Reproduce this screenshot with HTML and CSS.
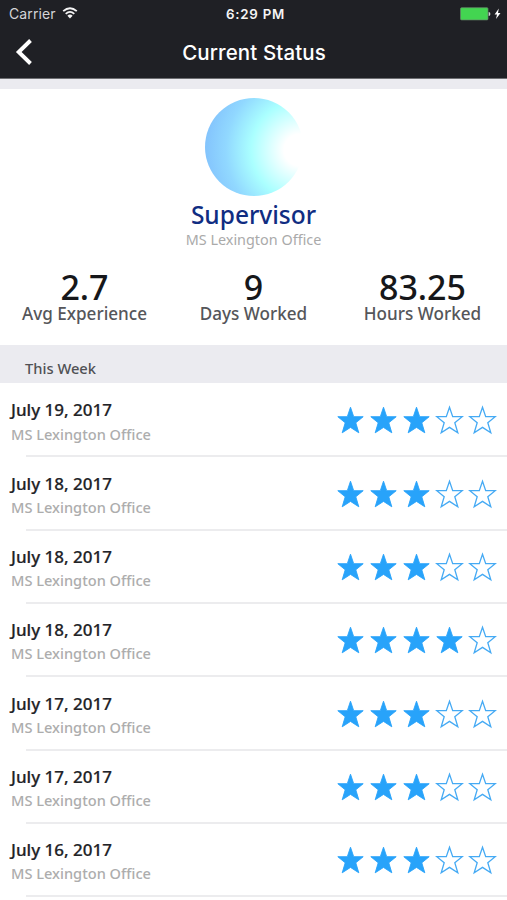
FILE: index.html
```
<!DOCTYPE html>
<html lang="en">
<head>
<meta charset="utf-8">
<title>Current Status</title>
<link rel="stylesheet" href="styles.css">
</head>
<body>
<svg class="defs" aria-hidden="true">
  <symbol id="star" viewBox="0 0 29 30"><path d="M14.5 2.2 L17.7 11.7 H27.2 L19.8 17.8 L22.8 27.8 L14.5 22.4 L6.2 27.8 L9.2 17.8 L1.8 11.7 H11.3 Z"/></symbol>
</svg>
<header class="top">
  <div class="status">
    <div class="carrier"><span>Carrier</span>
      <svg class="wifi" viewBox="0 0 16 12"><path d="M1.2 4.2 Q8 -1.8 14.8 4.2 M3.7 6.8 Q8 3 12.3 6.8" fill="none" stroke="#f4f4f5" stroke-width="1.8"/><path d="M5.4 8.7 Q8 6.5 10.6 8.7 L8 11.4Z" fill="#f4f4f5"/></svg>
    </div>
    <div class="time">6:29 PM</div>
    <div class="power">
      <svg viewBox="0 0 42 14"><rect x="0.5" y="0.7" width="27.5" height="12.2" rx="1" fill="#43d551" stroke="#66886b" stroke-width=".7"/><path d="M28.7 5 Q30.4 5.2 30.4 7 T28.7 9Z" fill="#d5d5d7"/><path d="M38.8 1.5 L34.6 7.5 H37 L36 12.1 L40.5 6 H38Z" fill="#fff"/></svg>
    </div>
  </div>
  <nav class="nav">
    <svg class="back" viewBox="0 0 18 28"><path d="M15.5 2.5 L3.7 14 L15.5 25.5" fill="none" stroke="#fff" stroke-width="3.9"/></svg>
    <h1>Current Status</h1>
  </nav>
</header>
<main>
  <section class="profile">
    <div class="avatar"></div>
    <h2>Supervisor</h2>
    <p class="office">MS Lexington Office</p>
    <div class="stats">
      <div><strong>2.7</strong><span>Avg Experience</span></div>
      <div><strong>9</strong><span>Days Worked</span></div>
      <div><strong>83.25</strong><span>Hours Worked</span></div>
    </div>
  </section>
  <h3 class="week"><span>This Week</span></h3>
  <ul class="list" id="list"></ul>
</main>
<script src="script.js"></script>
</body>
</html>
```
FILE: styles.css
```
* { box-sizing: border-box; }
body { margin: 0; width: 507px; height: 900px; overflow: hidden; background: #fff; color: #222327; font-family: "Noto Sans", "Open Sans", sans-serif; }
h1, h2, h3, p, ul { margin: 0; padding: 0; font-weight: 400; }
svg { display: block; }
span, strong, h1, h2, p { white-space: nowrap; }
.defs { position: absolute; width: 0; height: 0; }
.top { height: 79px; background: #1f2025; color: #fff; border-bottom: 1px solid #6d6e72; font-family: Inter, sans-serif; }
.status { display: grid; grid-template-columns: 1fr auto 1fr; align-items: center; height: 27px; padding: 0 5px 0 9px; }
.carrier { display: flex; align-items: center; gap: 6px; font-size: 14px; color: #d4d4d7; letter-spacing: .1px; }
.wifi { width: 16px; height: 12px; margin-top: -2px; }
.time { font-size: 13.3px; font-weight: 600; letter-spacing: .75px; color: #f4f4f5; }
.power { justify-self: end; }
.power svg { width: 42px; height: 14px; }
.nav { display: grid; grid-template-columns: 100px 1fr 100px; align-items: center; height: 51px; }
.nav h1 { margin: 0 0 0 1px; text-align: center; font-size: 20.5px; line-height: 24px; font-weight: 500; letter-spacing: .1px; }
.back { width: 18px; height: 28px; margin: -1px 0 0 15px; }
.profile { height: 266px; border-top: 10px solid #ebebf0; display: flex; flex-direction: column; align-items: center; }
.avatar { width: 98px; height: 98px; margin-top: 9px; border-radius: 50%; background: radial-gradient(circle at 95px 52px, #fff 0, #fff 16px, #aaffff 49px, #91d8ff 74px, #7fbdfc 102px); }
.profile h2 { margin-top: 3px; font-size: 24.5px; line-height: 32px; font-weight: 500; color: #102d82; }
.office { font-size: 14.4px; line-height: 18px; color: #aaa; }
.stats { display: grid; grid-template-columns: repeat(3, 1fr); width: 507px; margin-top: 23px; }
.stats div { display: flex; flex-direction: column; align-items: center; }
.stats strong { font-size: 34px; line-height: 30px; font-weight: 500; color: #16171a; }
.stats span { margin-top: 1px; font-size: 17.1px; line-height: 22px; font-weight: 500; color: #55565a; }
.week { height: 38.3px; padding: 11px 25px 0; background: #ebebf0; color: #505155; font-size: 14.7px; line-height: 24px; font-weight: 500; }
.list { list-style: none; }
.row { position: relative; display: flex; justify-content: space-between; height: 73.333px; padding: 0 10px 0 11px; }
.row::after { content: ""; position: absolute; left: 26px; right: 0; bottom: -.6px; height: 2px; background: #ececee; }
.info { display: flex; flex-direction: column; padding-top: 14.9px; }
.date { font-size: 17px; line-height: 24px; font-weight: 500; color: #222327; -webkit-text-stroke: .2px #222327; }
.place { margin-top: -.7px; font-size: 14.6px; line-height: 24px; font-weight: 500; color: #adadad; }
.stars { display: flex; gap: 4px; padding-top: 21.9px; }
.stars svg { width: 29px; height: 30px; fill: none; stroke: #45aaf4; stroke-width: 1.3; }
.stars svg.full { fill: #28a3fa; stroke: #28a3fa; stroke-width: .9; }
```
FILE: script.js
```
const entries = [
  ["July 19, 2017", 3], ["July 18, 2017", 3], ["July 18, 2017", 3],
  ["July 18, 2017", 4], ["July 17, 2017", 3], ["July 17, 2017", 3],
  ["July 16, 2017", 3]
];
document.getElementById("list").innerHTML = entries.map(([date, rating]) => `
  <li class="row">
    <div class="info"><span class="date">${date}</span><span class="place">MS Lexington Office</span></div>
    <div class="stars">${[1, 2, 3, 4, 5].map(n => `<svg class="${n <= rating ? "full" : ""}"><use href="#star"/></svg>`).join("")}</div>
  </li>`).join("");
```
